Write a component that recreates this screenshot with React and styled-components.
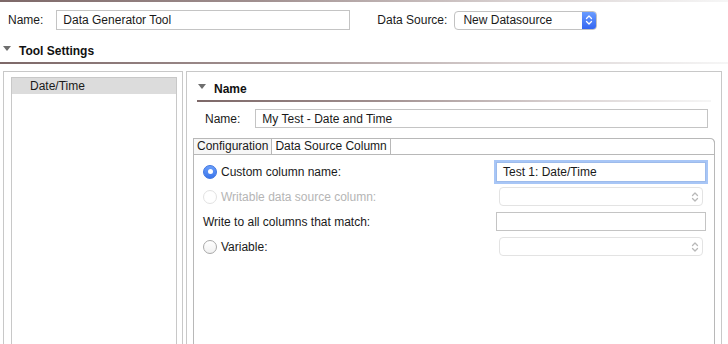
import React from 'react';
import styled, { createGlobalStyle } from 'styled-components';

const GlobalStyle = createGlobalStyle`
  html, body { margin: 0; padding: 0; background: #fff; }
  body { font-family: "Liberation Sans", Arial, sans-serif; font-size: 12px; color: #1a1a1a; }
  * { box-sizing: border-box; }
`;

const Page = styled.div`
  width: 728px; height: 344px;
  overflow: hidden;
  background: #fff;
`;

const Rule = styled.div`
  height: 2px;
  margin: ${(p) => p.$margin || '0'};
  background: linear-gradient(to right, #7d6868 0%, #a08f8f 35%, #d8d0d0 70%, #f6f6f6 100%);
`;

const TopBar = styled.div`
  display: flex; align-items: center;
  height: 20px;
  margin-top: 8px;
  padding-left: 8px;
`;

const Label = styled.span`
  color: ${(p) => (p.$disabled ? '#b5b5b5' : '#1a1a1a')};
  margin-left: ${(p) => p.$ml || 0}px;
  white-space: nowrap;
`;

const TextField = styled.div`
  height: ${(p) => p.$h || 20}px;
  width: ${(p) => p.$w}px;
  margin-left: ${(p) => p.$ml || 0}px;
  border: 1px solid #c4c4c4;
  background: #fff;
  display: flex; align-items: center;
  padding-left: 6px;
  ${(p) => p.$focus && `
    border-color: #9dbbeb;
    box-shadow: 0 0 0 2px #a8c6f6;
  `}
`;

const Select = styled.div`
  height: 19px;
  width: ${(p) => p.$w}px;
  margin-left: ${(p) => p.$ml || 0}px;
  border: 1px solid ${(p) => (p.$disabled ? '#e3e3e3' : '#c2c2c2')};
  border-radius: 4px;
  background: #fff;
  display: flex; align-items: center; justify-content: space-between;
  padding-left: 8px;
  overflow: hidden;
`;

const Stepper = styled.span`
  width: 14px; height: 100%;
  display: flex; align-items: center; justify-content: center;
  background: ${(p) => (p.$blue ? 'linear-gradient(#6a9cff, #3466f2)' : 'transparent')};
`;

const SectionHeader = styled.div`
  display: flex; align-items: center;
  height: 18px;
  padding-left: ${(p) => p.$pl || 3}px;
  margin-top: ${(p) => p.$mt || 0}px;
  font-weight: bold;
  color: #111;
`;

const Triangle = styled.span`
  width: 0; height: 0;
  border-left: 4px solid transparent;
  border-right: 4px solid transparent;
  border-top: 5px solid #6e6e6e;
  margin-right: 8px;
  margin-top: -6px;
`;

const Body = styled.div`
  display: flex;
  margin-top: 7px;
  padding-left: 3px;
  height: 300px;
`;

const LeftPanel = styled.div`
  flex: none;
  width: 180px;
  border: 1px solid #c8c8c8;
  padding: 5px 5px 0 7px;
  display: flex;
`;

const List = styled.div`
  flex: 1;
  border: 1px solid #c8c8c8;
`;

const ListItem = styled.div`
  height: 16px;
  line-height: 16px;
  padding-left: 18px;
  background: ${(p) => (p.$selected ? '#dcdcdc' : 'transparent')};
`;

const RightPanel = styled.div`
  flex: none;
  width: 536px;
  margin-left: 3px;
  border: 1px solid #c8c8c8;
  padding: 8px 6px 0 6px;
`;

const HeaderBlock = styled.div`
  margin: 0 4px;
`;

const FieldRow = styled.div`
  display: flex; align-items: center;
  height: 19px;
  margin-top: ${(p) => p.$mt || 0}px;
  padding-left: ${(p) => p.$pl || 0}px;
`;

const TabBox = styled.div`
  margin-top: 10px;
  border: 1px solid #b8b8b8;
  border-top: none;
  border-radius: 0 5px 0 0;
  height: 240px;
`;

const TabStrip = styled.div`
  display: flex;
  height: 17px;
  margin: 0 -1px;
  border-top: 1px solid #b8b8b8;
  border-right: 1px solid #b8b8b8;
  border-bottom: 1px solid #b8b8b8;
  border-radius: 0 5px 0 0;
`;

const Tab = styled.div`
  height: 100%;
  padding: 0 3px;
  line-height: 15px;
  border-left: 1px solid #b8b8b8;
  border-right: ${(p) => (p.$last ? '1px solid #b8b8b8' : 'none')};
  background: ${(p) => (p.$active ? '#fff' : '#f7f7f7')};
  white-space: nowrap;
`;

const Grid = styled.div`
  display: grid;
  grid-template-columns: 1fr 212px;
  grid-auto-rows: 25px;
  align-items: center;
  padding: 4px 6px 0 9px;
`;

const RadioRow = styled.div`
  display: flex; align-items: center;
  gap: 4px;
`;

const Radio = styled.span`
  width: 14px; height: 14px;
  border-radius: 50%;
  display: inline-flex; align-items: center; justify-content: center;
  ${(p) =>
    p.$checked
      ? `background: linear-gradient(#6c9ffa, #3a76ec); border: 1px solid #3d74e0;`
      : p.$disabled
      ? `background: #fff; border: 1px solid #e2e2e2;`
      : `background: linear-gradient(#ffffff, #f1f1f1); border: 1px solid #a9a9a9;`}
`;

const Dot = styled.span`
  width: 5px; height: 5px; border-radius: 50%; background: #fff;
`;

const Chevrons = ({ color }) => (
  <svg width="8" height="12" viewBox="0 0 8 12" fill="none" stroke={color} strokeWidth="1.3" strokeLinecap="round" strokeLinejoin="round">
    <path d="M1.5 4.5 L4 2 L6.5 4.5" />
    <path d="M1.5 7.5 L4 10 L6.5 7.5" />
  </svg>
);

const App = () => (
  <Page>
    <GlobalStyle />
    <Rule />
    <TopBar>
      <Label>Name:</Label>
      <TextField $w={294} $ml={13}>Data Generator Tool</TextField>
      <Label $ml={27}>Data Source:</Label>
      <Select $w={143} $ml={7}>
        New Datasource
        <Stepper $blue>
          <Chevrons color="#fff" />
        </Stepper>
      </Select>
    </TopBar>

    <SectionHeader $mt={12}>
      <Triangle />
      Tool Settings
    </SectionHeader>
    <Rule $margin="2px 0 0 0" />

    <Body>
      <LeftPanel>
        <List>
          <ListItem $selected>Date/Time</ListItem>
        </List>
      </LeftPanel>

      <RightPanel>
        <HeaderBlock>
          <SectionHeader $pl={1}>
            <Triangle />
            Name
          </SectionHeader>
          <Rule $margin="2px 0 0 0" />
        </HeaderBlock>

        <FieldRow $mt={7} $pl={12}>
          <Label>Name:</Label>
          <TextField $w={453} $h={19} $ml={15}>My Test - Date and Time</TextField>
        </FieldRow>

        <TabBox>
          <TabStrip>
            <Tab>Configuration</Tab>
            <Tab $active $last>Data Source Column</Tab>
          </TabStrip>
          <Grid>
            <RadioRow>
              <Radio $checked><Dot /></Radio>
              <Label>Custom column name:</Label>
            </RadioRow>
            <TextField $w={210} $focus>Test 1: Date/Time</TextField>

            <RadioRow>
              <Radio $disabled />
              <Label $disabled>Writable data source column:</Label>
            </RadioRow>
            <Select $w={204} $ml={3} $disabled>
              <span />
              <Stepper><Chevrons color="#b8b8b8" /></Stepper>
            </Select>

            <Label>Write to all columns that match:</Label>
            <TextField $w={210} $h={19} />

            <RadioRow>
              <Radio />
              <Label>Variable:</Label>
            </RadioRow>
            <Select $w={204} $ml={3} $disabled>
              <span />
              <Stepper><Chevrons color="#b8b8b8" /></Stepper>
            </Select>
          </Grid>
        </TabBox>
      </RightPanel>
    </Body>
  </Page>
);

export default App;
